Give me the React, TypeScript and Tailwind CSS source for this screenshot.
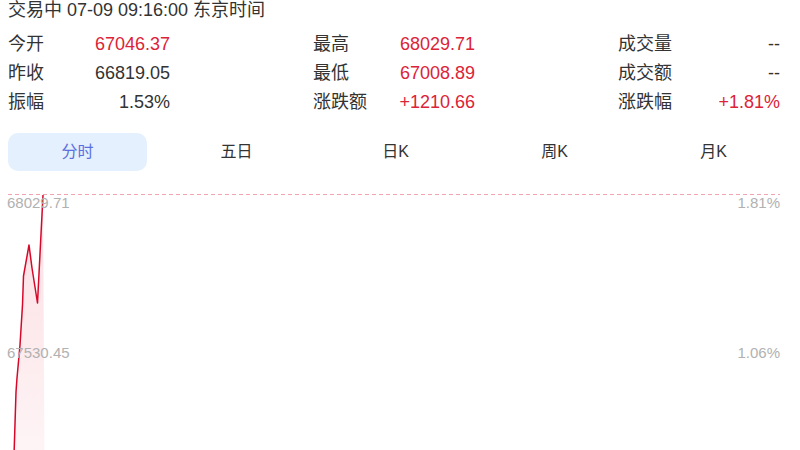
import React from "react";

const RED = "#dc2338";

type Cell = { label: string; value: string; red?: boolean };

const rows: Cell[][] = [
  [
    { label: "今开", value: "67046.37", red: true },
    { label: "最高", value: "68029.71", red: true },
    { label: "成交量", value: "--" },
  ],
  [
    { label: "昨收", value: "66819.05" },
    { label: "最低", value: "67008.89", red: true },
    { label: "成交额", value: "--" },
  ],
  [
    { label: "振幅", value: "1.53%" },
    { label: "涨跌额", value: "+1210.66", red: true },
    { label: "涨跌幅", value: "+1.81%", red: true },
  ],
];

const tabs = ["分时", "五日", "日K", "周K", "月K"];

// intraday price path, chart-local coordinates (chart starts below the tabs)
const OFF = 171;
const pts: [number, number][] = [
  [14, 456],
  [16, 392],
  [17, 378],
  [20, 345],
  [22.5, 305],
  [23.5, 276],
  [29, 245],
  [32, 268],
  [37.5, 303],
  [43, 195],
];

function Chart() {
  const line = pts.map(([x, y]) => `${x},${y - OFF}`).join(" ");
  const area = `${line} 44.5,${456 - OFF} 14,${456 - OFF}`;
  return (
    <svg width={800} height={279} className="block">
      <defs>
        <linearGradient id="areaFill" x1="0" y1="0" x2="0" y2="1">
          <stop offset="0%" stopColor="#e8304a" stopOpacity="0.16" />
          <stop offset="100%" stopColor="#e8304a" stopOpacity="0.05" />
        </linearGradient>
      </defs>
      <line x1={8} y1={23.5} x2={780} y2={23.5} stroke="#f2a3b1" strokeWidth={1.2} strokeDasharray="4 3" />
      <polygon points={area} fill="url(#areaFill)" />
      <polyline points={line} fill="none" stroke="#d6082a" strokeWidth={1.5} strokeLinejoin="round" />
      <g fill="#b1b1b1" fontSize={15} fontFamily="'Liberation Sans', Arial, sans-serif">
        <text x={7} y={37}>68029.71</text>
        <text x={780} y={37} textAnchor="end">1.81%</text>
        <text x={7} y={187}>67530.45</text>
        <text x={780} y={187} textAnchor="end">1.06%</text>
      </g>
    </svg>
  );
}

export default function App() {
  return (
    <div
      className="w-[800px] h-[450px] overflow-hidden bg-white text-[#333]"
      style={{ fontFamily: "'Liberation Sans', Arial, 'Noto Sans CJK SC', sans-serif" }}
    >
      <div className="px-2">
        <div className="h-[20px] leading-[20px] text-[18px] whitespace-nowrap">交易中 07-09 09:16:00 东京时间</div>
        <div className="mt-[9.5px] flex flex-col">
          {rows.map((row, i) => (
            <div key={i} className="flex justify-between w-[772px] h-[29px] items-center text-[18px] leading-[29px]">
              {row.map((c) => (
                <div key={c.label} className="flex justify-between w-[162px]">
                  <span>{c.label}</span>
                  <span className={c.red ? "text-[#dc2338]" : "text-[#333]"}>{c.value}</span>
                </div>
              ))}
            </div>
          ))}
        </div>
        <div className="mt-[16.5px] flex gap-[20px] w-[775px]">
          {tabs.map((t, i) => (
            <div
              key={t}
              className={
                i === 0
                  ? "w-[139px] h-[38px] rounded-[10px] bg-[#e4f0fd] text-[#5b6fe0] flex items-center justify-center text-[16px]"
                  : "w-[139px] h-[38px] flex items-center justify-center text-[16px] text-[#333]"
              }
            >
              {t}
            </div>
          ))}
        </div>
      </div>
      <Chart />
    </div>
  );
}
